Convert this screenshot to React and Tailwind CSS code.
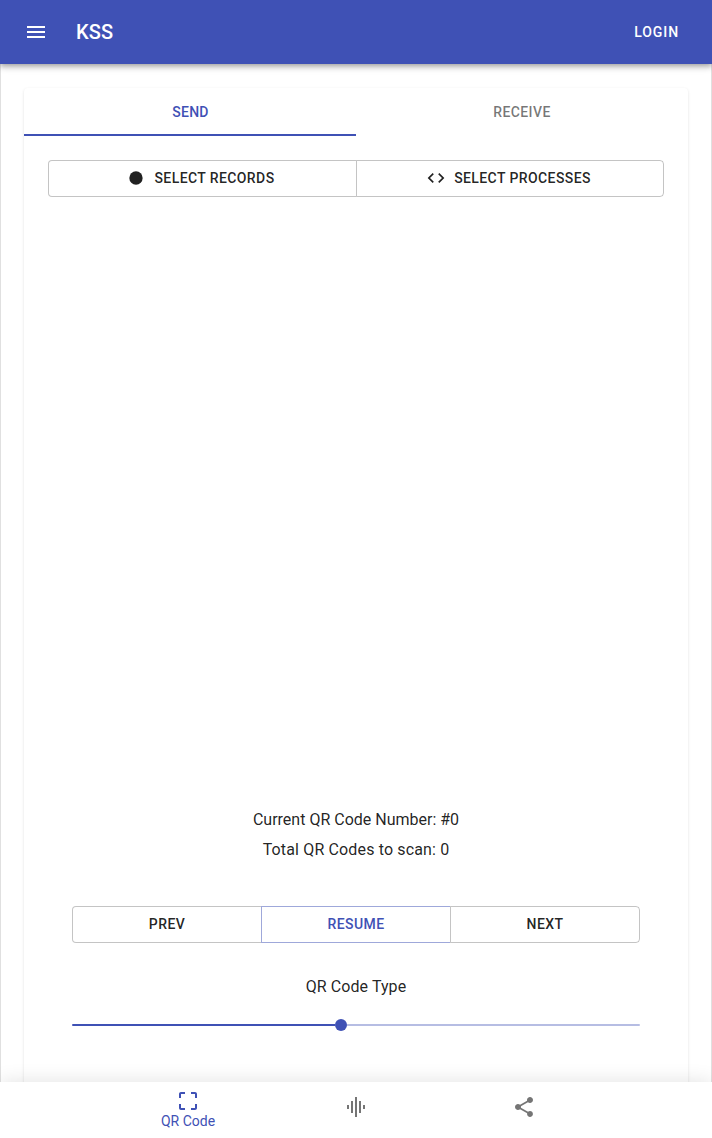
import React from 'react';

const ICONS = {
  menu: 'M3 18h18v-2H3v2zm0-5h18v-2H3v2zm0-7v2h18V6H3z',
  code: 'M9.4 16.6L4.8 12l4.6-4.6L8 6l-6 6 6 6 1.4-1.4zm5.2 0l4.6-4.6-4.6-4.6L16 6l6 6-6 6-1.4-1.4z',
  frame:
    'M3 5v4h2V5h4V3H5c-1.1 0-2 .9-2 2zm2 10H3v4c0 1.1.9 2 2 2h4v-2H5v-4zm14 4h-4v2h4c1.1 0 2-.9 2-2v-4h-2v4zm0-16h-4v2h4v4h2V5c0-1.1-.9-2-2-2z',
  sound: 'M7 18h2V6H7v12zm4 4h2V2h-2v20zm-8-8h2v-4H3v4zm12 4h2V6h-2v12zm4-8v4h2v-4h-2z',
  share:
    'M18 16.08c-.76 0-1.44.3-1.96.77L8.91 12.7c.05-.23.09-.46.09-.7s-.04-.47-.09-.7l7.05-4.11c.54.5 1.25.81 2.04.81 1.66 0 3-1.34 3-3s-1.34-3-3-3-3 1.34-3 3c0 .24.04.47.09.7L8.04 9.81C7.5 9.31 6.79 9 6 9c-1.66 0-3 1.34-3 3s1.34 3 3 3c.79 0 1.5-.31 2.04-.81l7.12 4.16c-.05.21-.08.43-.08.65 0 1.61 1.31 2.92 2.92 2.92 1.61 0 2.92-1.31 2.92-2.92s-1.31-2.92-2.92-2.92z',
};

function Icon({ name, className = 'size-6' }) {
  return (
    <svg viewBox="0 0 24 24" fill="currentColor" className={`shrink-0 ${className}`} aria-hidden="true">
      {name === 'record' ? <circle cx="12" cy="12" r="8" /> : <path d={ICONS[name]} />}
    </svg>
  );
}

function GroupButton({ className, children }) {
  return (
    <button
      className={`flex h-[37px] items-center justify-center border pb-px text-sm leading-6 font-medium tracking-[0.4px] uppercase ${className}`}
    >
      {children}
    </button>
  );
}

const neutral = 'border-black/[0.23]';

function NavItem({ icon, label }) {
  return (
    <button
      className={`flex w-[168px] flex-col items-center justify-center ${label ? 'pb-0.5 text-[#3f51b5]' : 'pb-1.5 text-black/[0.54]'}`}
    >
      <Icon name={icon} />
      {label && <span className="text-sm leading-4">{label}</span>}
    </button>
  );
}

export default function App() {
  return (
    <div className="flex h-[1138px] flex-col overflow-hidden bg-white font-['Roboto',sans-serif] text-black/[0.87]">
      <header className="z-10 flex h-16 shrink-0 items-center bg-[#3f51b5] px-6 text-white shadow-[0_2px_4px_-1px_rgba(0,0,0,0.2),0_4px_5px_0_rgba(0,0,0,0.14),0_1px_10px_0_rgba(0,0,0,0.12)]">
        <button aria-label="Menu">
          <Icon name="menu" />
        </button>
        <h1 className="ml-7 flex-1 text-xl leading-8 font-medium tracking-[0.0075em]">KSS</h1>
        <button className="px-[9px] text-sm leading-6 font-medium tracking-[0.9px]">LOGIN</button>
      </header>

      <main className="min-h-0 flex-1 overflow-hidden border-x border-black/[0.12] px-[23px] pt-6">
        <section className="h-[1040px] rounded bg-white shadow-[0_2px_1px_-1px_rgba(0,0,0,0.02),0_1px_1px_0_rgba(0,0,0,0.03),0_1px_3px_0_rgba(0,0,0,0.12)]">
          <div className="flex h-12 text-sm font-medium tracking-[0.4px]">
            <button className="w-1/2 border-b-2 border-[#3f51b5] pt-0.5 pl-px tracking-[0.3px] text-[#3f51b5]">SEND</button>
            <button className="w-1/2 text-black/[0.54]">RECEIVE</button>
          </div>

          <div className="p-6">
            <div className="flex">
              <GroupButton className={`w-1/2 gap-2 rounded-l border-r-0 ${neutral}`}>
                <Icon name="record" className="-ml-1 size-5" />
                Select Records
              </GroupButton>
              <GroupButton className={`w-1/2 gap-2 rounded-r pl-px ${neutral}`}>
                <Icon name="code" className="-ml-1 size-5" />
                Select Processes
              </GroupButton>
            </div>

            <div className="h-[611px]" />

            <div className="flex flex-col gap-1.5 text-center leading-6 tracking-[0.15px]">
              <p className="tracking-normal">Current QR Code Number: #0</p>
              <p>Total QR Codes to scan: 0</p>
            </div>

            <div className="mt-11 px-6">
              <div className="flex">
                <GroupButton className={`flex-1 rounded-l border-r-0 ${neutral}`}>Prev</GroupButton>
                <GroupButton className="flex-1 border-r-0 border-[#3f51b5]/50 text-[#3f51b5]">Resume</GroupButton>
                <GroupButton className={`flex-1 rounded-r ${neutral}`}>Next</GroupButton>
              </div>
              <p className="mt-8 text-center leading-6 tracking-[0.07px]">QR Code Type</p>
              <div className="mt-5 flex h-3 items-center">
                <div className="h-0.5 w-[263px] rounded-l-[1px] bg-[#3f51b5]" />
                <div className="size-3 rounded-full bg-[#3f51b5]" />
                <div className="h-0.5 flex-1 rounded-r-[1px] bg-[#3f51b5]/[0.38]" />
              </div>
            </div>
          </div>
        </section>
      </main>

      <nav className="z-10 flex h-14 shrink-0 justify-center bg-white shadow-[0_0_20px_rgba(0,0,0,0.12)]">
        <NavItem icon="frame" label="QR Code" />
        <NavItem icon="sound" />
        <NavItem icon="share" />
      </nav>
    </div>
  );
}
